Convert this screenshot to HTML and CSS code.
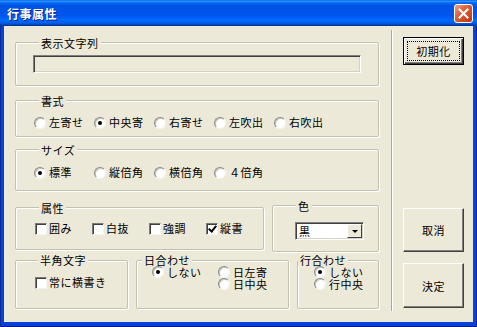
FILE: index.html
```html
<!DOCTYPE html>
<html>
<head>
<title>行事属性</title>
<link rel="stylesheet" href="styles.css">
</head>
<body>
<div class="window">
  <div class="titlebar">
    <span class="title">行事属性</span>
    <span class="close">
      <svg width="11" height="11" viewBox="0 0 11 11"><path d="M1.5 1.5 L9.5 9.5 M9.5 1.5 L1.5 9.5" stroke="#fff" stroke-width="2" stroke-linecap="square"/></svg>
    </span>
  </div>
  <div class="frame">
    <div class="client">
      <div class="left">
        <div class="group g-text">
          <div class="group-title">表示文字列</div>
          <div class="textbox"></div>
        </div>

        <div class="group g-format">
          <div class="group-title">書式</div>
          <div class="opts">
            <label class="opt"><span class="radio"></span>左寄せ</label>
            <label class="opt"><span class="radio on"></span>中央寄</label>
            <label class="opt"><span class="radio"></span>右寄せ</label>
            <label class="opt"><span class="radio"></span>左吹出</label>
            <label class="opt"><span class="radio"></span>右吹出</label>
          </div>
        </div>

        <div class="group g-size">
          <div class="group-title">サイズ</div>
          <div class="opts">
            <label class="opt"><span class="radio on"></span>標準</label>
            <label class="opt"><span class="radio"></span>縦倍角</label>
            <label class="opt"><span class="radio"></span>横倍角</label>
            <label class="opt"><span class="radio"></span>４倍角</label>
          </div>
        </div>

        <div class="row row-attr">
          <div class="group g-attr">
            <div class="group-title">属性</div>
            <div class="opts checks">
              <label class="opt"><span class="check"></span>囲み</label>
              <label class="opt"><span class="check"></span>白抜</label>
              <label class="opt"><span class="check"></span>強調</label>
              <label class="opt"><span class="check on"></span>縦書</label>
            </div>
          </div>
          <div class="group g-color">
            <div class="group-title">色</div>
            <div class="select">
              <span class="select-value">黒</span>
              <span class="select-arrow"></span>
            </div>
          </div>
        </div>

        <div class="row row-bottom">
          <div class="group g-half">
            <div class="group-title">半角文字</div>
            <div class="opts checks">
              <label class="opt"><span class="check"></span>常に横書き</label>
            </div>
          </div>
          <div class="group g-day">
            <div class="group-title">日合わせ</div>
            <div class="day-grid">
              <label class="opt"><span class="radio on"></span>しない</label>
              <label class="opt"><span class="radio"></span>日左寄</label>
              <span></span>
              <label class="opt"><span class="radio"></span>日中央</label>
            </div>
          </div>
          <div class="group g-line">
            <div class="group-title">行合わせ</div>
            <div class="line-list">
              <label class="opt"><span class="radio on"></span>しない</label>
              <label class="opt"><span class="radio"></span>行中央</label>
            </div>
          </div>
        </div>
      </div>

      <div class="separator"></div>

      <div class="right">
        <div class="btn btn-default"><span class="focus">初期化</span></div>
        <div class="btn btn-cancel">取消</div>
        <div class="btn btn-ok">決定</div>
      </div>
    </div>
  </div>
</div>
</body>
</html>
```

FILE: styles.css
```css
body {
  margin: 0;
  font-family: "Noto Sans CJK JP", "Noto Sans", sans-serif;
  font-size: 11px;
  letter-spacing: 0.5px;
  color: #000;
  background-color: #fff;
}
.window {
  width: 477px;
  height: 327px;
  display: flex;
  flex-direction: column;
}
.titlebar {
  height: 26px;
  flex: none;
  display: flex;
  align-items: center;
  justify-content: space-between;
  background: linear-gradient(to bottom, #0058ee 0%, #3593ff 4%, #288eff 6%, #127dff 8%, #036ffc 10%, #0262ee 14%, #0057e5 20%, #0054e3 24%, #0055eb 56%, #005bf5 66%, #026afe 76%, #0062ef 86%, #0052d6 92%, #0040ab 96%, #003092 100%);
}
.title {
  margin-left: 7px;
  color: white;
  font-weight: bold;
  font-size: 12px;
  letter-spacing: 0.5px;
  text-shadow: 1px 1px 0 #0a1e8c;
}
.close {
  width: 19px;
  height: 19px;
  box-sizing: border-box;
  margin-right: 4px;
  margin-top: 1px;
  border: 1px solid #fff;
  border-radius: 3px;
  background: linear-gradient(135deg, #f0a08a 0%, #e0673f 35%, #cc4a22 70%, #b8391a 100%);
  display: flex;
  align-items: center;
  justify-content: center;
}
.frame {
  flex: 1;
  display: flex;
  padding: 0 4px 5px 4px;
  background-color: #0842d6;
  box-shadow: inset 1px 0 0 #0a2ca0, inset -1px 0 0 #0a2ca0, inset 0 -1px 0 #001e8c;
}
.client {
  flex: 1;
  display: flex;
  background-color: #ece9d8;
}
.left {
  width: 364px;
  margin-left: 11px;
  display: flex;
  flex-direction: column;
}
.group {
  box-sizing: border-box;
  border: 1px solid #c4c1b0;
  border-radius: 2px;
  box-shadow: 1px 1px 0 #fff, inset 1px 1px 0 #fff;
}
.group-title {
  display: table;
  margin: -6px 0 0 23px;
  padding: 0 2px;
  height: 12px;
  line-height: 12px;
  background-color: #ece9d8;
}
.g-text {
  margin-top: 16px;
  height: 44px;
}
.textbox {
  width: 328px;
  height: 18px;
  box-sizing: border-box;
  margin: 6px 0 0 17px;
  border: 1px solid;
  border-color: #808080 #fff #fff #808080;
  box-shadow: inset 1px 1px 0 #404040, inset -1px -1px 0 #d4d0c8;
}
.g-format {
  margin-top: 14px;
  height: 37px;
}
.g-size {
  margin-top: 12px;
  height: 42px;
}
.opts {
  display: flex;
  padding-left: 18px;
}
.g-format .opts { margin-top: 9px; }
.g-size .opts { margin-top: 10px; }
.opt {
  display: flex;
  align-items: center;
  width: 60px;
  height: 13px;
  line-height: 13px;
  white-space: nowrap;
}
.radio {
  width: 12px;
  height: 12px;
  box-sizing: border-box;
  margin-right: 3px;
  border-radius: 50%;
  border: 1px solid;
  border-color: #8a8a86 #f4f4f0 #f4f4f0 #8a8a86;
  background-color: #fff;
  box-shadow: inset 1px 1px 0 #c8c6bc;
  display: flex;
  align-items: center;
  justify-content: center;
  flex: none;
}
.radio.on::after {
  content: "";
  width: 4px;
  height: 4px;
  border-radius: 50%;
  background-color: #000;
}
.check {
  width: 12px;
  height: 12px;
  box-sizing: border-box;
  margin-right: 2px;
  border: 1px solid;
  border-color: #7a7a76 #f4f4f0 #f4f4f0 #7a7a76;
  box-shadow: inset 1px 1px 0 #404040;
  background-color: #fff;
  flex: none;
  display: flex;
  align-items: center;
  justify-content: center;
}
.check.on::after {
  content: "";
  width: 3px;
  height: 6px;
  margin-top: -2px;
  border-right: 2px solid #000;
  border-bottom: 2px solid #000;
  transform: rotate(40deg);
}
.checks { padding-left: 19px; }
.row {
  display: flex;
  gap: 8px;
  align-items: flex-start;
}
.row-attr { margin-top: 14px; }
.g-attr {
  width: 249px;
  height: 43px;
  margin-top: 2px;
}
.g-attr .opts { margin-top: 8px; }
.g-color {
  width: 107px;
  height: 47px;
}
.g-color .group-title { margin-left: 23px; }
.select {
  width: 69px;
  height: 18px;
  box-sizing: border-box;
  margin: 10px 0 0 22px;
  display: flex;
  border: 1px solid;
  border-color: #808080 #fff #fff #808080;
  box-shadow: inset 1px 1px 0 #404040, inset -1px -1px 0 #d4d0c8;
  background-color: #fff;
  padding: 1px;
}
.select-value {
  flex: 1;
  line-height: 14px;
  padding-left: 2px;
}
.select-arrow {
  width: 15px;
  box-sizing: border-box;
  background-color: #ece9d8;
  border: 1px solid;
  border-color: #fff #404040 #404040 #fff;
  display: flex;
  align-items: center;
  justify-content: center;
}
.select-arrow::after {
  content: "";
  border-left: 3px solid transparent;
  border-right: 3px solid transparent;
  border-top: 3px solid #000;
}
.row-bottom { margin-top: 8px; }
.row-bottom .group { height: 49px; }
.row-bottom .group-title {
  height: 11px;
  line-height: 11px;
}
.g-half { width: 113px; }
.g-half .group-title { margin-left: 22px; }
.g-half .opts { margin-top: 10px; }
.g-half .opt { width: auto; }
.g-day { width: 153px; }
.g-day .group-title { margin-left: 5px; }
.day-grid {
  display: grid;
  grid-template-columns: 66px 66px;
  padding-left: 15px;
}
.row-bottom .day-grid .opt,
.row-bottom .line-list .opt {
  height: 12px;
  line-height: 12px;
}
.g-line { width: 82px; }
.g-line .group-title { margin-left: 0; }
.line-list {
  padding-left: 16px;
}
.separator {
  width: 1px;
  margin: 4px 0 11px 12px;
  background-color: #aca899;
  border-right: 1px solid #fff;
}
.right {
  display: flex;
  flex-direction: column;
  padding: 11px 0 14px 10px;
}
.btn {
  width: 61px;
  box-sizing: border-box;
  display: flex;
  align-items: center;
  justify-content: center;
  background-color: #ece9d8;
  border: 1px solid;
  border-color: #fff #404040 #404040 #fff;
  box-shadow: inset -1px -1px 0 #808080;
}
.btn-default {
  height: 28px;
  border-color: #000;
  box-shadow: inset 1px 1px 0 #fff, inset -1px -1px 0 #404040, inset -2px -2px 0 #808080;
  padding: 3px;
}
.focus {
  flex: 1;
  align-self: stretch;
  display: flex;
  align-items: center;
  justify-content: center;
  border: 1px dotted #000;
}
.btn-cancel {
  height: 44px;
  margin-top: auto;
}
.btn-ok {
  height: 45px;
  margin-top: 11px;
}
```
